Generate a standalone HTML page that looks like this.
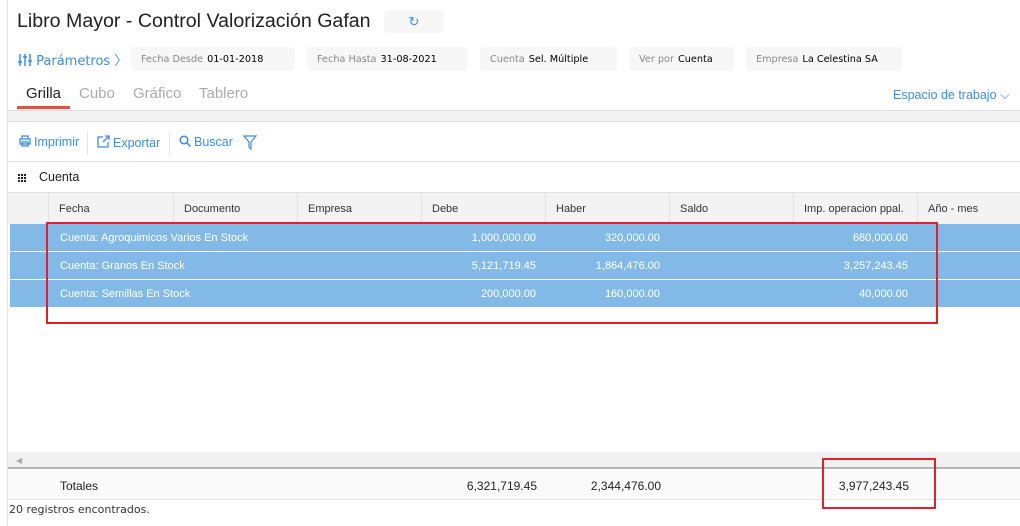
<!DOCTYPE html><html><head><style>
body{margin:0;width:1020px;height:526px;background:#fff;font-family:"Liberation Sans",sans-serif;position:relative;overflow:hidden}
.a{position:absolute}
.chip{position:absolute;top:47px;height:24px;background:#f7f7f7;border-radius:4px;line-height:26px;padding-left:10px;color:#000;font-family:"DejaVu Sans",sans-serif;font-size:9.7px}
.chip span{color:#888;margin-right:4px}
.tab{position:absolute;top:85px;font-size:15px;color:#aaa}
.hd{position:absolute;top:193px;height:30px;line-height:32px;font-size:11px;color:#333;border-left:1px solid #e2e2e2;padding-left:10px;box-sizing:border-box}
.row{position:absolute;left:10px;width:1010px;height:27px;background:#82b9e6;color:#fff;font-size:11px;line-height:28px}
.row div{position:absolute}
.tb{position:absolute;top:135px;font-size:12.5px;color:#3a8ee6}
.tb svg{vertical-align:-1px;margin-right:3px}
</style></head><body>
<div class="a" style="left:17px;top:10px;font-size:19.6px;color:#222">Libro Mayor - Control Valorización Gafan</div>
<div class="a" style="left:384px;top:10px;width:60px;height:23px;background:#f7f7f7;border-radius:4px;color:#3a8ee6;text-align:center;font-size:13px;line-height:23px">↻</div>
<div class="a" style="left:18px;top:50px;font-size:13px;color:#3a8ee6;font-family:'DejaVu Sans',sans-serif">
<svg width="14" height="14" viewBox="0 0 14 14" style="vertical-align:-2px" stroke="#3a8ee6" stroke-width="1.5"><path d="M2 1v12M7 1v12M12 1v12M0 9h4M5 4h4M10 8h4"/></svg> Parámetros 〉</div>
<div class="chip" style="left:131px;width:154px"><span>Fecha Desde</span>01-01-2018</div>
<div class="chip" style="left:307px;width:151px"><span>Fecha Hasta</span>31-08-2021</div>
<div class="chip" style="left:480px;width:127px"><span>Cuenta</span>Sel. Múltiple</div>
<div class="chip" style="left:629px;width:95px"><span>Ver por</span>Cuenta</div>
<div class="chip" style="left:746px;width:146px"><span>Empresa</span>La Celestina SA</div>
<div class="tab" style="left:26px;color:#222">Grilla</div>
<div class="a" style="left:17px;top:106px;width:53px;height:3px;background:#e5533d"></div>
<div class="tab" style="left:79px">Cubo</div>
<div class="tab" style="left:133px">Gráfico</div>
<div class="tab" style="left:199px">Tablero</div>
<div class="a" style="left:893px;top:88px;font-size:12.5px;color:#3a8ee6">Espacio de trabajo ⌵</div>
<div class="a" style="left:7px;top:110px;width:1013px;height:10px;background:#f3f3f3;border-top:1px solid #ddd;border-bottom:1px solid #ddd"></div>
<div class="a" style="left:7px;top:0;width:1px;height:526px;background:#e5e5e5"></div>
<div class="tb" style="left:19px"><svg width="12" height="12" viewBox="0 0 12 12" stroke="#3a8ee6" fill="none" stroke-width="1.3"><path d="M3 4V1h6v3M1 4h10v5H1zM3 7h6v4H3z"/></svg>Imprimir</div>
<div class="a" style="left:87px;top:131px;width:1px;height:24px;background:#e5e5e5"></div>
<div class="tb" style="left:97px"><svg width="13" height="13" viewBox="0 0 13 13" stroke="#3a8ee6" fill="none" stroke-width="1.3"><path d="M6 2H1v10h10V7M8 1h4v4M12 1L6 7"/></svg>Exportar</div>
<div class="a" style="left:169px;top:131px;width:1px;height:24px;background:#e5e5e5"></div>
<div class="tb" style="left:179px"><svg width="12" height="12" viewBox="0 0 12 12" stroke="#3a8ee6" fill="none" stroke-width="1.5"><circle cx="5" cy="5" r="3.8"/><path d="M8 8l3.5 3.5"/></svg>Buscar</div>
<svg class="a" style="left:243px;top:135px" width="14" height="15" viewBox="0 0 14 15" stroke="#3a8ee6" fill="none" stroke-width="1.2"><path d="M1 1h12L8 7v7L6 12V7z"/></svg>
<div class="a" style="left:8px;top:161px;width:1012px;height:1px;background:#e5e5e5"></div>
<svg class="a" style="left:18px;top:174px" width="8" height="8" viewBox="0 0 8 8" fill="#222"><rect x="0" y="0" width="2" height="2"/><rect x="3" y="0" width="2" height="2"/><rect x="6" y="0" width="2" height="2"/><rect x="0" y="3" width="2" height="2"/><rect x="3" y="3" width="2" height="2"/><rect x="6" y="3" width="2" height="2"/><rect x="0" y="6" width="2" height="2"/><rect x="3" y="6" width="2" height="2"/><rect x="6" y="6" width="2" height="2"/></svg>
<div class="a" style="left:39px;top:170px;font-size:12.5px;color:#222">Cuenta</div>
<div class="a" style="left:8px;top:192px;width:1012px;height:31px;background:#f3f3f3;border-top:1px solid #e2e2e2"></div>
<div class="hd" style="left:48px;width:125px">Fecha</div>
<div class="hd" style="left:173px;width:124px">Documento</div>
<div class="hd" style="left:297px;width:124px">Empresa</div>
<div class="hd" style="left:421px;width:124px">Debe</div>
<div class="hd" style="left:545px;width:124px">Haber</div>
<div class="hd" style="left:669px;width:124px">Saldo</div>
<div class="hd" style="left:793px;width:124px">Imp. operacion ppal.</div>
<div class="hd" style="left:917px;width:103px">Año - mes</div>
<div class="row" style="top:224px"><div style="left:50px">Cuenta: Agroquimicos Varios En Stock</div><div style="right:484px">1,000,000.00</div><div style="right:360px">320,000.00</div><div style="right:112px">680,000.00</div></div>
<div class="row" style="top:252px"><div style="left:50px">Cuenta: Granos En Stock</div><div style="right:484px">5,121,719.45</div><div style="right:360px">1,864,476.00</div><div style="right:112px">3,257,243.45</div></div>
<div class="row" style="top:280px"><div style="left:50px">Cuenta: Semillas En Stock</div><div style="right:484px">200,000.00</div><div style="right:360px">160,000.00</div><div style="right:112px">40,000.00</div></div>
<div class="a" style="left:46px;top:222px;width:888px;height:98px;border:2px solid #e0202a"></div>
<div class="a" style="left:8px;top:452px;width:1012px;height:17px;background:#f1f1f1;border-bottom:2px solid #b5b5b5;font-size:8px;color:#aaa;line-height:17px;padding-left:8px;box-sizing:border-box">◀</div>
<div class="a" style="left:8px;top:471px;width:1012px;height:28px;background:#fafafa;border-bottom:1px solid #e5e5e5;font-size:12px;color:#222;line-height:30px">
<div class="a" style="left:52px">Totales</div><div class="a" style="right:483px">6,321,719.45</div><div class="a" style="right:359px">2,344,476.00</div><div class="a" style="right:111px">3,977,243.45</div></div>
<div class="a" style="left:822px;top:458px;width:110px;height:47px;border:2px solid #e0202a"></div>
<div class="a" style="left:9px;top:503px;font-size:11px;color:#333;font-family:'DejaVu Sans',sans-serif">20 registros encontrados.</div>
</body></html>
